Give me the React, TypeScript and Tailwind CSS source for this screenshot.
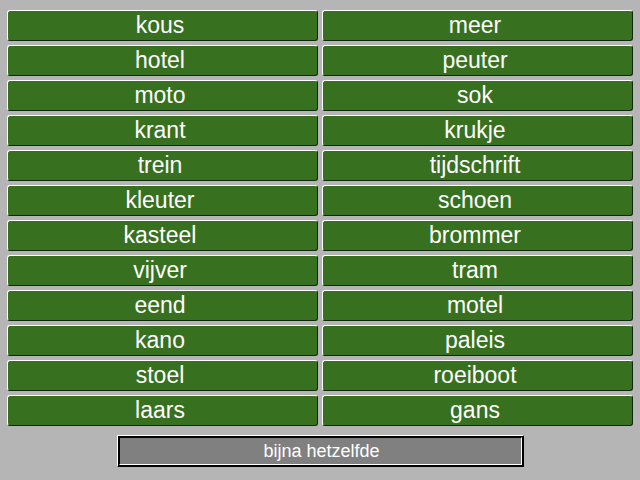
import React from "react";

const left = ["kous","hotel","moto","krant","trein","kleuter","kasteel","vijver","eend","kano","stoel","laars"];
const right = ["meer","peuter","sok","krukje","tijdschrift","schoen","brommer","tram","motel","paleis","roeiboot","gans"];

export default function App() {
  const items: string[] = [];
  for (let i = 0; i < left.length; i++) { items.push(left[i]); items.push(right[i]); }
  return (
    <div className="w-[640px] h-[480px] bg-[#b5b5b5] overflow-hidden" style={{ fontFamily: '"Liberation Sans", Arial, sans-serif' }}>
      <div className="grid grid-cols-[311px_311px] gap-x-[4px] gap-y-[4px] pl-[7px] pt-[10px]">
        {items.map((w, i) => (
          <div key={i} className="h-[31px] rounded-[3px] bg-[#37701f] border border-t-white border-l-white border-b-[#10280a] border-r-[#10280a] flex items-center justify-center pr-[5px] text-[23px] leading-none text-white">
            {w}
          </div>
        ))}
      </div>
      <div className="ml-[117px] mt-[9px] w-[407px] h-[32px] border border-t-white border-l-white border-b-black border-r-black">
        <div className="w-full h-full border border-black">
          <div className="w-full h-full border border-t-black border-l-black border-b-white border-r-white bg-[#808080] flex items-center justify-center pl-[2px] text-[18px] text-white">
            bijna hetzelfde
          </div>
        </div>
      </div>
    </div>
  );
}
